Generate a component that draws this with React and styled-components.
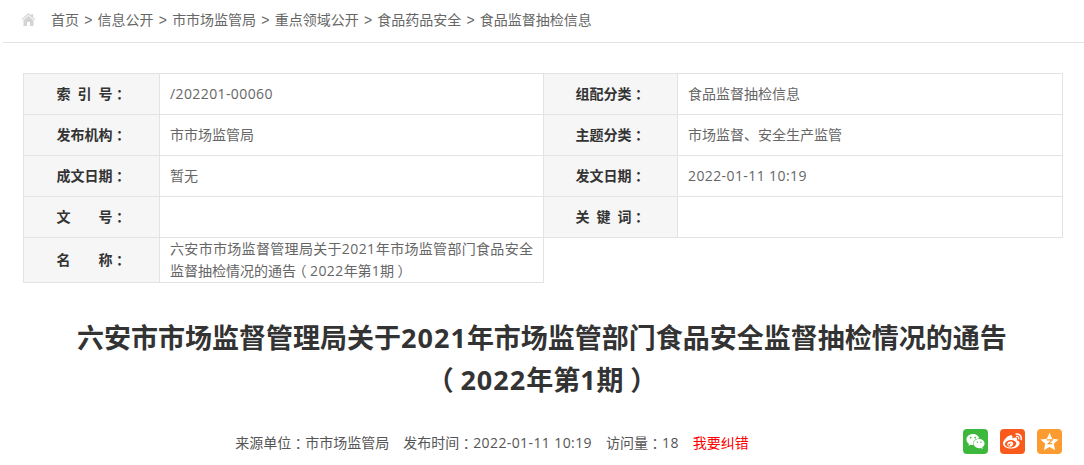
import React from 'react'
import styled, { createGlobalStyle } from 'styled-components'
import { FaWeixin, FaWeibo } from 'react-icons/fa'

const FONT = '"Open Sans", "Noto Sans CJK SC", "Liberation Sans", sans-serif'

const GlobalStyle = createGlobalStyle`
	html, body {
		margin: 0;
		padding: 0;
		background: #fff;
	}
	body {
		font-family: ${FONT};
		color: #555;
		overflow: hidden;
	}
`

const crumbs = ['首页', '信息公开', '市市场监管局', '重点领域公开', '食品药品安全', '食品监督抽检信息']

const App = () => {
	const rows = [
		['索\u2002引\u2002号', <Num>/202201-00060</Num>, '组配分类', '食品监督抽检信息'],
		['发布机构', '市市场监管局', '主题分类', '市场监督、安全生产监管'],
		['成文日期', '暂无', '发文日期', <Num>2022-01-11 10:19</Num>],
		['文　　号', '', '关\u2002键\u2002词', ''],
	]
	return (
		<Page>
			<GlobalStyle />
			<Breadcrumb>
				<HomeIcon viewBox="0 0 16 14">
					<path d="M8 0 L0.5 6.6 L1.4 7.6 L8 1.9 L14.6 7.6 L15.5 6.6 L12.8 4.2 V1 H11 V2.7 Z" fill="#d4d4d4" />
					<path d="M8 3 L2.6 7.7 V14 H6.4 V9.6 H9.6 V14 H13.4 V7.7 Z" fill="#d4d4d4" />
				</HomeIcon>
				{crumbs.map((c, i) => (
					<React.Fragment key={c}>
						{i > 0 && <Sep>&gt;</Sep>}
						<span>{c}</span>
					</React.Fragment>
				))}
			</Breadcrumb>

			<InfoTable>
				<colgroup>
					<col width="136" />
					<col width="384" />
					<col width="134" />
					<col width="385" />
				</colgroup>
				<tbody>
					{rows.map(r => (
						<tr key={r[0]}>
							<LabelCell>{r[0]}<Punct>：</Punct></LabelCell>
							<ValueCell>{r[1]}</ValueCell>
							<LabelCell>{r[2]}<Punct>：</Punct></LabelCell>
							<ValueCell>{r[3]}</ValueCell>
						</tr>
					))}
					<tr>
						<LabelCell $tall>名　　称<Punct>：</Punct></LabelCell>
						<NameCell>
							六安市市场监督管理局关于<Num>2021</Num>年市场监管部门食品安全监督抽检情况的通告
							<Punct>（</Punct><Num>2022</Num>年第<Num>1</Num>期<Punct>）</Punct>
						</NameCell>
					</tr>
				</tbody>
			</InfoTable>

			<Title>
				六安市市场监督管理局关于<TitleNum>2021</TitleNum>年市场监管部门食品安全监督抽检情况的通告
				<br />
				<Punct>（</Punct><TitleNum>2022</TitleNum>年第<TitleNum>1</TitleNum>期<Punct>）</Punct>
			</Title>

			<MetaBar>
				<Meta>
					<span>来源单位<Punct>：</Punct>市市场监管局</span>
					<span>发布时间<Punct>：</Punct><Num>2022-01-11 10:19</Num></span>
					<span>访问量<Punct>：</Punct><Num>18</Num></span>
					<Report>我要纠错</Report>
				</Meta>
				<Share>
					<ShareButton color="#3cb93c">
						<FaWeixin size={19} />
					</ShareButton>
					<ShareButton color="#fa5a1c">
						<FaWeibo size={19} />
					</ShareButton>
					<ShareButton color="#fc9c30">
						<svg width="21" height="21" viewBox="0 0 24 24">
							<path
								d="M12 2 L15 8.8 L22.4 9.6 L16.9 14.6 L18.4 21.9 L12 18.2 L5.6 21.9 L7.1 14.6 L1.6 9.6 L9 8.8 Z"
								fill="#fff"
							/>
							<path d="M9 10.2 H15 L10.8 14.4 H15.2" fill="none" stroke="#fc9c30" strokeWidth="1.5" />
						</svg>
					</ShareButton>
				</Share>
			</MetaBar>
		</Page>
	)
}

const Page = styled.div`
	width: 1084px;
	height: 465px;
	overflow: hidden;
`

const Breadcrumb = styled.div`
	display: flex;
	align-items: center;
	height: 39px;
	margin-left: 3px;
	padding: 0 0 3px 18px;
	border-bottom: 1px solid #e3e3e3;
	font-size: 14px;
	line-height: 20px;
	color: #666;
`

const HomeIcon = styled.svg`
	width: 15px;
	height: 13px;
	margin-right: 15px;
`

const Sep = styled.span`
	margin: 0 5.2px;
	font-family: "Liberation Sans", sans-serif;
`

const InfoTable = styled.table`
	width: 1039px;
	margin: 30px 0 0 23px;
	border-collapse: collapse;
	table-layout: fixed;
	font-size: 14px;
`

const LabelCell = styled.td`
	height: ${props => (props.$tall ? '42px' : '38px')};
	padding: 0 0 2px;
	border: 1px solid #e3e3e3;
	background: #f6f6f6;
	color: #333;
	font-weight: 700;
	text-align: center;
	white-space: pre;
`

const ValueCell = styled.td`
	padding: 0 10px 2px;
	border: 1px solid #e3e3e3;
	color: #666;
`

const NameCell = styled(ValueCell)`
	padding-bottom: 0;
	line-height: 22px;
	text-align: justify;
`

// the source font centres full-width punctuation: half-width glyph, padded back to 1em
const Punct = styled.span`
	font-feature-settings: "halt";
	padding: 0 0.25em;
`

const Num = styled.span`
	letter-spacing: 0.4px;
`

const TitleNum = styled.span`
	letter-spacing: 1px;
`

const Title = styled.h1`
	margin: 34px 0 0;
	font-size: 27px;
	font-weight: 700;
	line-height: 42px;
	color: #333;
	text-align: center;
`

const MetaBar = styled.div`
	position: relative;
	margin-top: 28px;
	height: 25px;
	padding-right: 100px;
	display: flex;
	justify-content: center;
	align-items: center;
`

const Meta = styled.div`
	display: flex;
	gap: 14px;
	font-size: 14px;
	color: #555;
`

const Report = styled.span`
	color: #f00;
`

const Share = styled.div`
	position: absolute;
	right: 22px;
	top: 0;
	display: flex;
	gap: 12px;
`

const ShareButton = styled.a`
	display: flex;
	align-items: center;
	justify-content: center;
	width: 25px;
	height: 25px;
	border-radius: 4px;
	background: ${props => props.color};
	color: #fff;
`

export default App
